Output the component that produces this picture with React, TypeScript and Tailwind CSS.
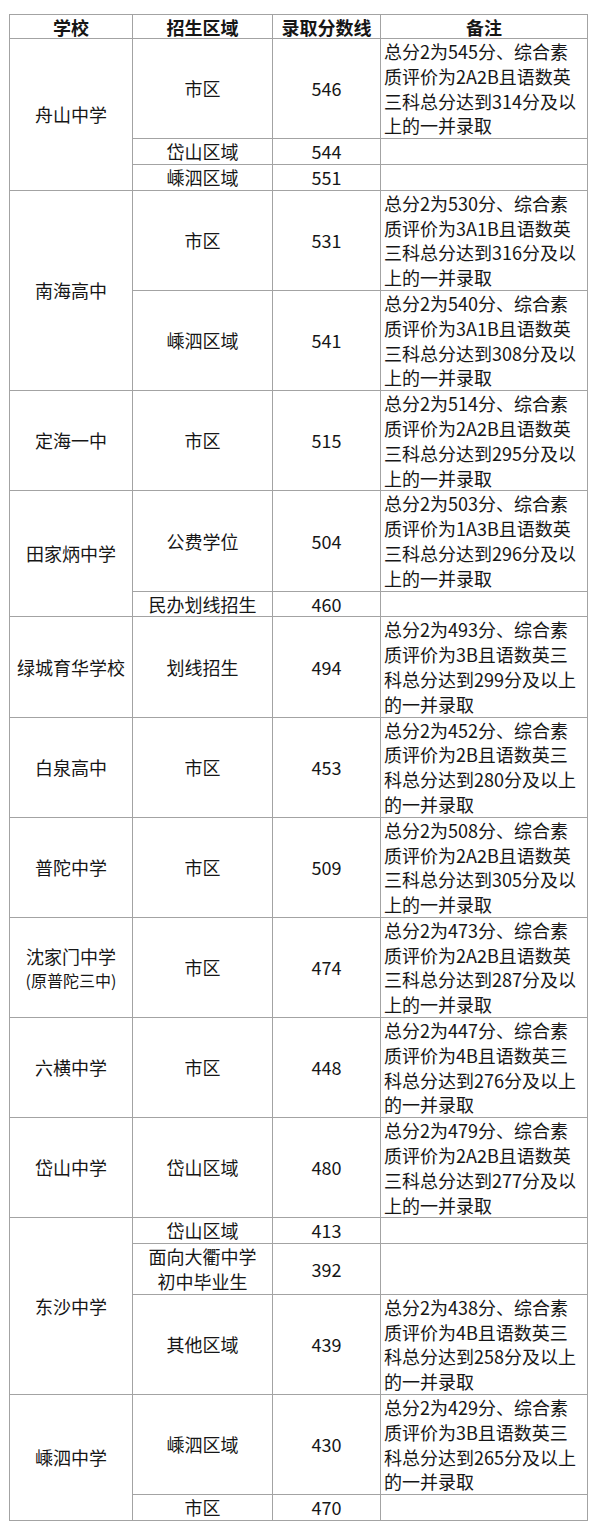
type Row = {
  school?: { name: string; sub?: string; span: number };
  area: string[];
  score: string;
  note?: string[];
};

const note = (total: string, grade: string, sum: string, short = false) =>
  short
    ? [`总分2为${total}分、综合素`, `质评价为${grade}且语数英三`, `科总分达到${sum}分及以上`, '的一并录取']
    : [`总分2为${total}分、综合素`, `质评价为${grade}且语数英`, `三科总分达到${sum}分及以`, '上的一并录取'];

const rows: Row[] = [
  { school: { name: '舟山中学', span: 3 }, area: ['市区'], score: '546', note: note('545', '2A2B', '314') },
  { area: ['岱山区域'], score: '544' },
  { area: ['嵊泗区域'], score: '551' },
  { school: { name: '南海高中', span: 2 }, area: ['市区'], score: '531', note: note('530', '3A1B', '316') },
  { area: ['嵊泗区域'], score: '541', note: note('540', '3A1B', '308') },
  { school: { name: '定海一中', span: 1 }, area: ['市区'], score: '515', note: note('514', '2A2B', '295') },
  { school: { name: '田家炳中学', span: 2 }, area: ['公费学位'], score: '504', note: note('503', '1A3B', '296') },
  { area: ['民办划线招生'], score: '460' },
  { school: { name: '绿城育华学校', span: 1 }, area: ['划线招生'], score: '494', note: note('493', '3B', '299', true) },
  { school: { name: '白泉高中', span: 1 }, area: ['市区'], score: '453', note: note('452', '2B', '280', true) },
  { school: { name: '普陀中学', span: 1 }, area: ['市区'], score: '509', note: note('508', '2A2B', '305') },
  { school: { name: '沈家门中学', sub: '(原普陀三中)', span: 1 }, area: ['市区'], score: '474', note: note('473', '2A2B', '287') },
  { school: { name: '六横中学', span: 1 }, area: ['市区'], score: '448', note: note('447', '4B', '276', true) },
  { school: { name: '岱山中学', span: 1 }, area: ['岱山区域'], score: '480', note: note('479', '2A2B', '277') },
  { school: { name: '东沙中学', span: 3 }, area: ['岱山区域'], score: '413' },
  { area: ['面向大衢中学', '初中毕业生'], score: '392' },
  { area: ['其他区域'], score: '439', note: note('438', '4B', '258', true) },
  { school: { name: '嵊泗中学', span: 2 }, area: ['嵊泗区域'], score: '430', note: note('429', '3B', '265', true) },
  { area: ['市区'], score: '470' },
];

const cell = 'border border-[#a3a3a3] align-middle p-0';

export default function App() {
  return (
    <div className="min-h-screen bg-white pl-[9px] pt-[14px] text-[#161616] font-['Noto_Sans_CJK_SC','Noto_Sans',sans-serif]">
      <table className="w-[578px] table-fixed border-collapse text-[18px] leading-[24.8px]">
        <colgroup>
          <col className="w-[123px]" />
          <col className="w-[140px]" />
          <col className="w-[108px]" />
          <col className="w-[207px]" />
        </colgroup>
        <thead>
          <tr className="h-[24px] font-bold leading-[22px]">
            <th className={`${cell} text-center`}>学校</th>
            <th className={`${cell} text-center`}>招生区域</th>
            <th className={`${cell} text-center`}>录取分数线</th>
            <th className={`${cell} text-center`}>备注</th>
          </tr>
        </thead>
        <tbody>
          {rows.map((row, i) => (
            <tr key={i}>
              {row.school && (
                <td rowSpan={row.school.span} className={`${cell} text-center`}>
                  <div>{row.school.name}</div>
                  {row.school.sub && <div className="text-[16px] leading-[22px]">{row.school.sub}</div>}
                </td>
              )}
              <td className={`${cell} text-center`}>
                {row.area.map((a) => (
                  <div key={a}>{a}</div>
                ))}
              </td>
              <td className={`${cell} text-center`}>{row.score}</td>
              <td className={`${cell} pl-[3px] text-left`}>
                {row.note ? (
                  row.note.map((l) => (
                    <div key={l} className="whitespace-nowrap">
                      {l}
                    </div>
                  ))
                ) : (
                  <div>&nbsp;</div>
                )}
              </td>
            </tr>
          ))}
        </tbody>
      </table>
    </div>
  );
}
